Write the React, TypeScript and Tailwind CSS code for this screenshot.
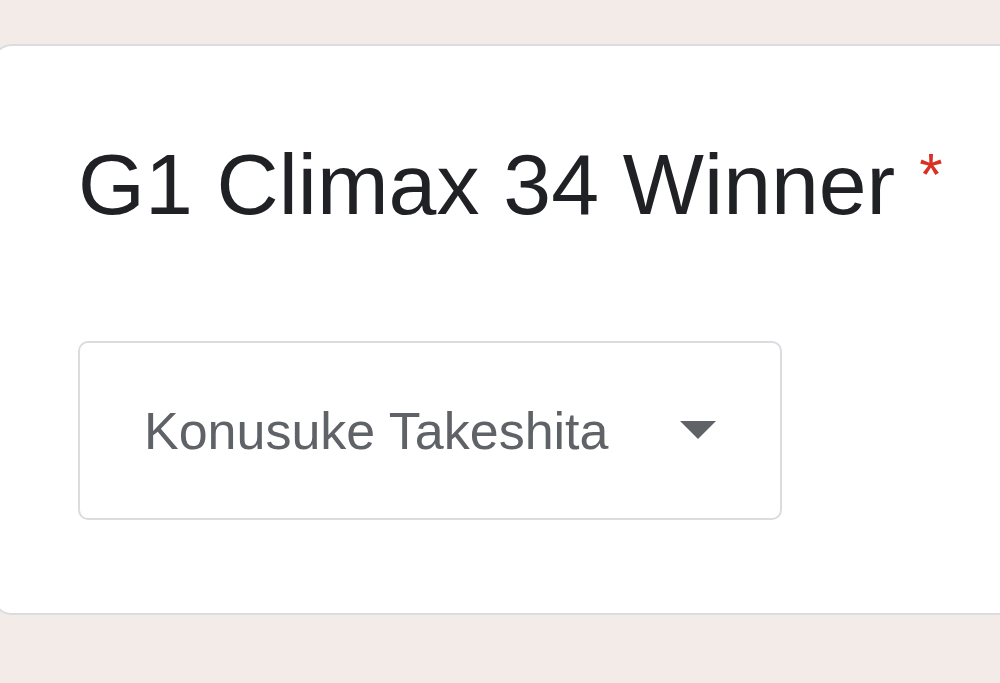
export default function App() {
  return (
    <main
      className="min-h-screen w-full overflow-hidden bg-[#f3ebe8] pt-[44px]"
      style={{ fontFamily: "'Liberation Sans', Arial, sans-serif" }}
    >
      <section className="ml-[-8px] w-[1040px] rounded-[20px] border-2 border-[#dadce0] bg-white pl-[84px] pt-[95px] pb-[93px]">
        {/* Question title */}
        <h2 className="text-[86px] leading-none text-[#202124] whitespace-nowrap">
          G1 Climax 34 Winner{" "}
          <span className="relative top-[-19px] text-[60px] text-[#d93025]">*</span>
        </h2>

        {/* Dropdown */}
        <div className="mt-[114px] flex h-[179px] w-[704px] items-center justify-between rounded-[10px] border-2 border-[#dadce0] pl-[64px] pr-[64px]">
          <span className="text-[52px] leading-none text-[#5f6368]">Konusuke Takeshita</span>
          <svg width="36" height="18" viewBox="0 0 36 18" className="mt-[-2px]">
            <path d="M0 0 L36 0 L18 18 Z" fill="#5f6368" />
          </svg>
        </div>
      </section>
    </main>
  );
}
